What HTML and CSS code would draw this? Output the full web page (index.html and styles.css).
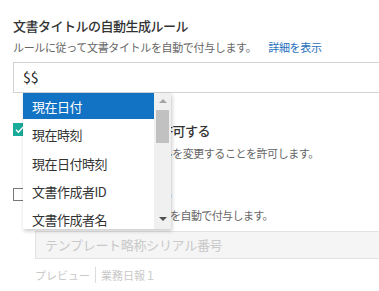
FILE: index.html
```html
<!doctype html>
<html>
<head>
<meta charset="utf-8">
<title>文書タイトルの自動生成ルール</title>
<link rel="stylesheet" href="styles.css">
</head>
<body>
<div class="page">
  <div class="section">
    <h2 class="title">文書タイトルの自動生成ルール</h2>
    <p class="sub">ルールに従って文書タイトルを自動で付与します。<a href="#" class="more">詳細を表示</a></p>

    <div class="field">
      <div class="text-input">$$</div>
      <div class="dropdown">
        <ul class="options">
          <li class="on">現在日付</li>
          <li>現在時刻</li>
          <li>現在日付時刻</li>
          <li>文書作成者ID</li>
          <li>文書作成者名</li>
        </ul>
        <div class="scrollbar">
          <span class="arrow up"></span>
          <span class="thumb"></span>
          <span class="arrow down"></span>
        </div>
      </div>
    </div>

    <div class="check first">
      <span class="box checked">
        <svg width="13" height="13" viewBox="0 0 13 13"><path d="M3 6.8l2.4 2.4L10.2 4" fill="none" stroke="#fff" stroke-width="1.4"/></svg>
      </span>
      <div class="check-text">
        <div class="label">文書タイトルの変更を許可する</div>
        <div class="desc">利用者が後から文書タイトルを変更することを許可します。</div>
      </div>
    </div>

    <div class="check second">
      <span class="box"></span>
      <div class="check-text">
        <div class="label">シリアル番号を付与する</div>
        <div class="desc">文書タイトルにシリアル番号を自動で付与します。</div>
      </div>
    </div>

    <div class="sub-field">
      <div class="text-input disabled">テンプレート略称シリアル番号</div>
      <div class="preview"><span class="pv-label">プレビュー</span><span class="pv-value">業務日報１</span></div>
    </div>
  </div>
</div>
</body>
</html>
```

FILE: styles.css
```css
body { margin:0; background:#fff; font-family:"Noto Sans CJK JP", "Liberation Sans", sans-serif; color:#333; }
.page { width:379px; height:291px; overflow:hidden; }
.section { width:420px; padding:17px 0 0 13px; }

.title { margin:0; font-size:13px; line-height:18px; font-weight:500; color:#333; letter-spacing:-0.5px; }
.sub { margin:4px 0 0; font-size:11px; line-height:16px; color:#666; letter-spacing:-0.35px; }
.sub .more { margin-left:12px; color:#2a72bd; text-decoration:none; }

.field { position:relative; margin-top:7px; }
.text-input { height:29px; border:1px solid #d2d2d2; padding-left:9px; font-size:14px; line-height:29px; color:#222; }

.dropdown { position:absolute; left:10px; top:31px; width:148px; height:136px; background:#fff; display:flex; box-shadow:1px 2px 4px rgba(0,0,0,.22); z-index:2; overflow:hidden; }
.options { list-style:none; margin:0; padding:0; flex:1; }
.options li { height:26.4px; line-height:27px; margin-bottom:1.9px; padding-left:9px; font-size:13px; color:#333; letter-spacing:-0.5px; }
.options li.on { background:#1273c4; color:#fff; }
.scrollbar { width:17px; background:#f0f0f0; position:relative; }
.scrollbar .thumb { position:absolute; left:2px; top:17px; width:13px; height:33px; background:#c1c1c1; }
.arrow { position:absolute; left:5px; width:0; height:0; border-left:4px solid transparent; border-right:4px solid transparent; }
.arrow.up { top:6px; border-bottom:4px solid #a3a3a3; }
.arrow.down { bottom:8px; border-top:4px solid #505050; }

.check { display:flex; gap:9px; }
.check.first { margin-top:29px; }
.check.second { margin-top:24px; }
.box { width:11px; height:11px; border:1px solid #777; margin-top:3px; flex:none; }
.box.checked { width:13px; height:13px; border:none; background:#1aab9b; margin-top:1px; }
.box svg { display:block; }
.check-text .label { font-size:13px; line-height:18px; font-weight:500; color:#333; letter-spacing:-0.5px; }
.check-text .desc { margin-top:5px; font-size:11px; line-height:16px; color:#666; letter-spacing:-0.45px; white-space:nowrap; }
.check.second .desc { margin-top:4px; letter-spacing:-0.6px; }

.sub-field { margin:8px 0 0 22px; }
.text-input.disabled { height:26px; line-height:26px; border-color:#e2e2e2; background:#f5f5f5; color:#c9c9c9; font-size:13px; letter-spacing:-0.3px; }
.preview { margin-top:8px; font-size:11px; line-height:16px; color:#c9c9c9; display:flex; }
.pv-label { padding-right:5px; border-right:1px solid #ddd; }
.pv-value { padding-left:5px; }
```
